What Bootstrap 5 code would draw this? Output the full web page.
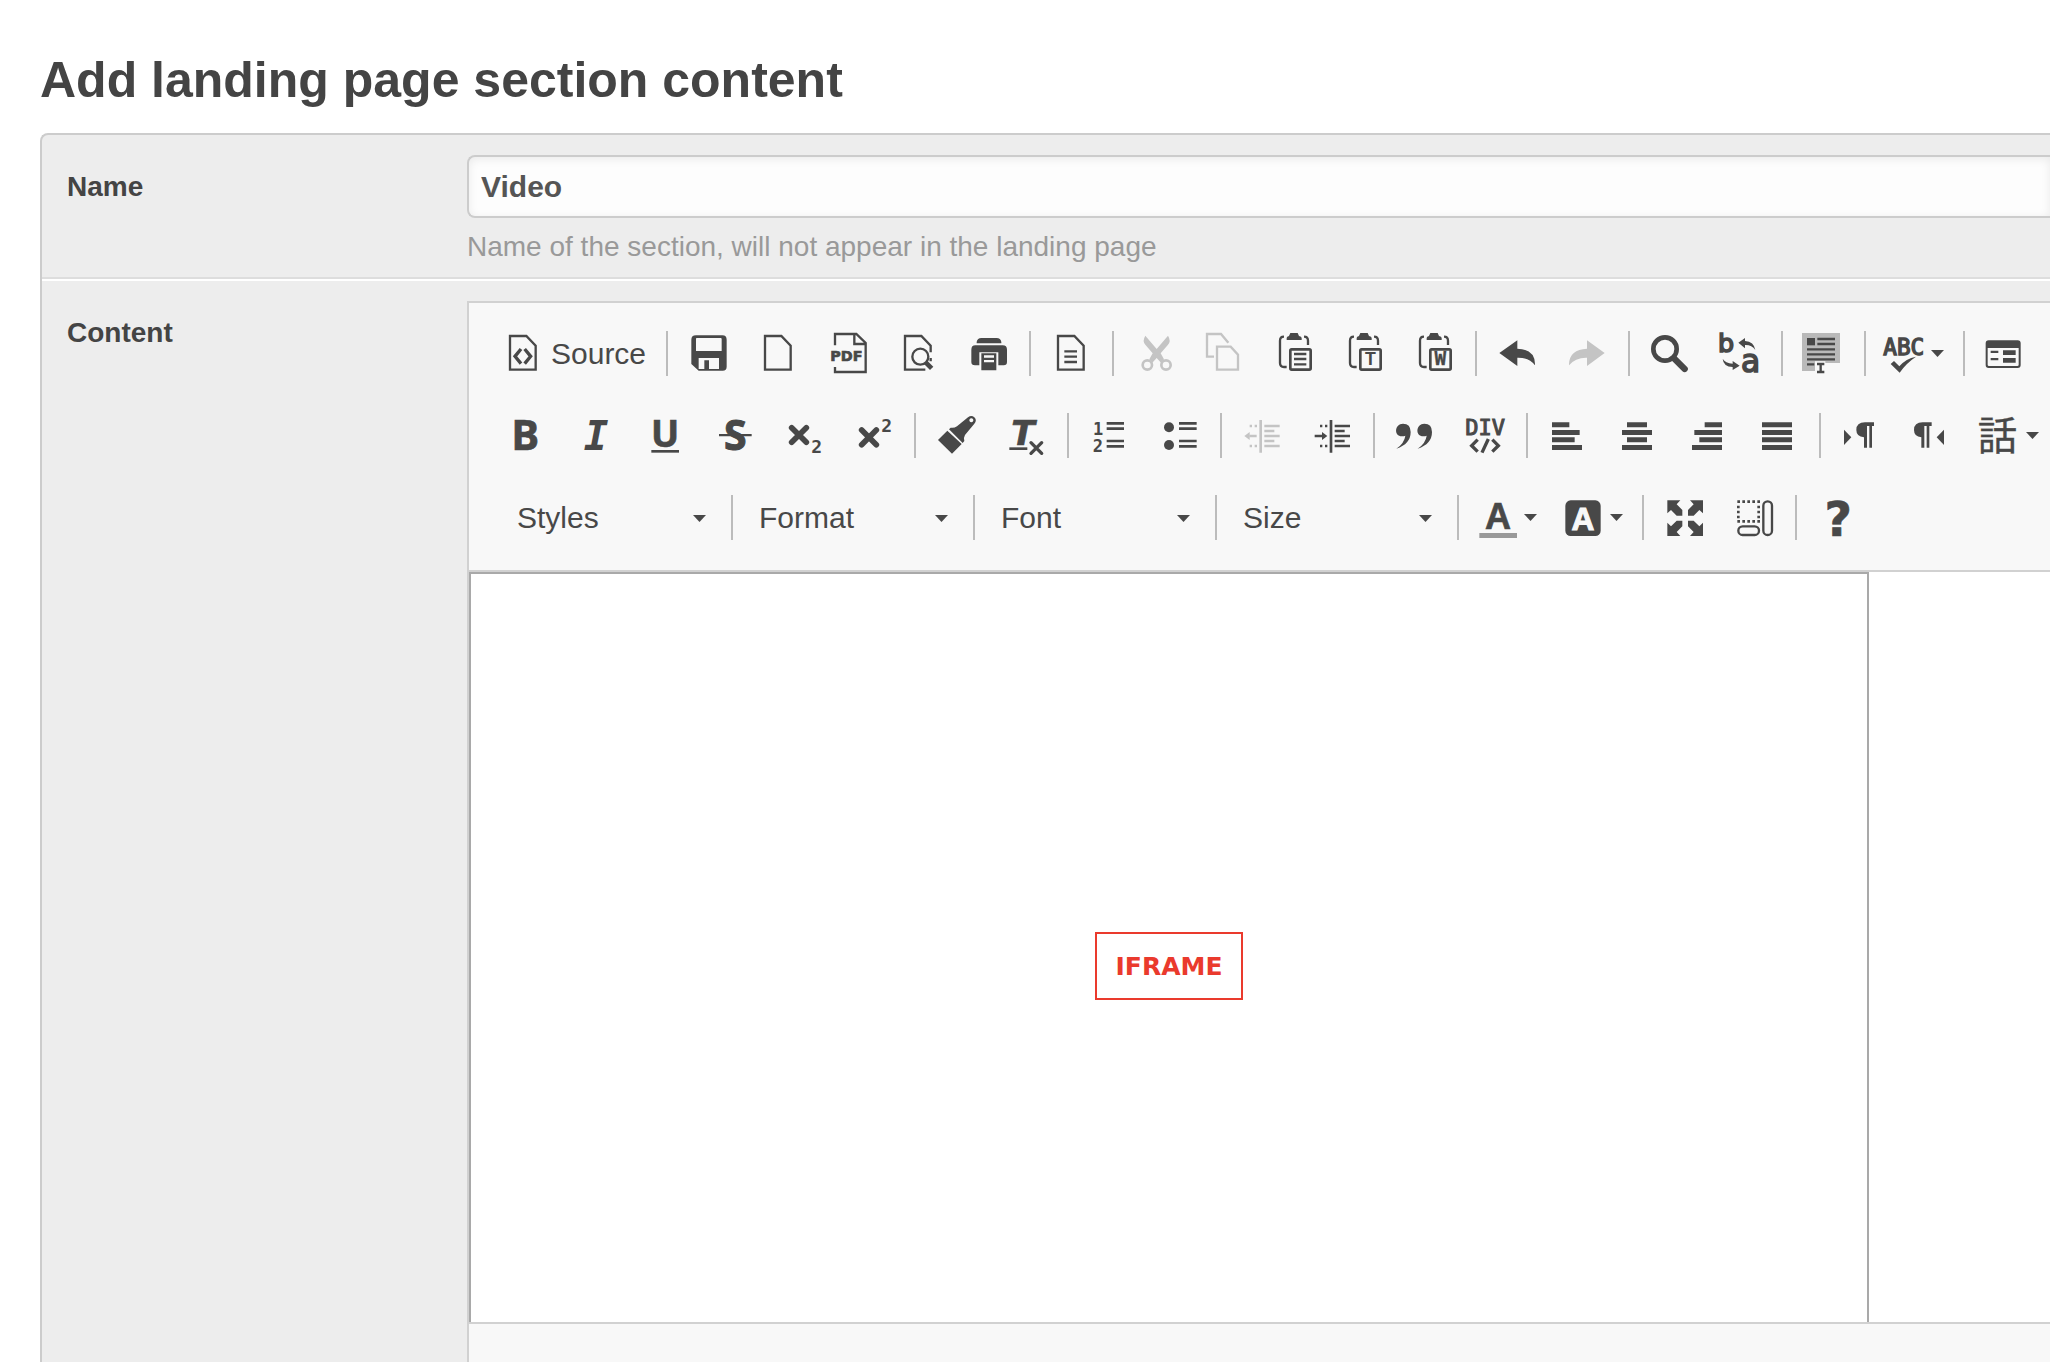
<!DOCTYPE html>
<html lang="en">
<head>
<meta charset="utf-8">
<meta name="viewport" content="width=device-width, initial-scale=1">
<title>Add landing page section content</title>
<link href="https://cdn.jsdelivr.net/npm/bootstrap@5.3.0/dist/css/bootstrap.min.css" rel="stylesheet">
<style>
body { font-family: "Liberation Sans", Arial, sans-serif; color: #444; background: #fff; overflow-x: hidden; }
.page { padding: 50px 0 0 40px; }
.page-title { font-size: 50px; line-height: 60px; font-weight: 700; margin-bottom: 23px; color: #444; }
.form-panel { border: 2px solid #ccc; border-right: 0; border-bottom: 0; border-top-left-radius: 8px; background: #ededed; }
.form-line { padding: 20px 0 0 25px; }
.form-line + .form-line { border-top: 2px solid #fff; }
.name-line { padding-bottom: 14px; border-bottom: 2px solid #ddd; }
.line-label { flex: 0 0 400px; padding-top: 16px; font-size: 28px; line-height: 32px; font-weight: 700; }
.name-input { height: 63px; padding: 0 12px; border: 2px solid #ccc; border-right: 0; border-radius: 8px 0 0 8px; background: #fdfdfd; box-shadow: inset 0 2px 10px rgba(0,0,0,.08); font-size: 30px; font-weight: 700; color: #555; }
.hint { margin-top: 13px; font-size: 28px; line-height: 32px; color: #999; }
.editor { border: 2px solid #d1d1d1; border-right: 0; border-bottom: 0; background: #f8f8f8; }
.tools { padding: 28px 0 30px 19px; gap: 37px; border-bottom: 2px solid #d1d1d1; }
.tool-row { height: 45px; }
.tool { flex: none; width: 70px; height: 45px; padding: 0; border: 0; background: none; color: #484848; display: flex; align-items: center; justify-content: center; }
.tool:disabled { color: #c4c4c4; }
.tool svg { width: 40px; height: 41px; flex: none; display: block; overflow: visible; fill: currentColor; }
.tool .caret { width: 13px; height: 7px; }
.tool-source { width: 172px; justify-content: flex-start; padding-left: 15px; gap: 8px; font-size: 30px; }
.tool-menu { width: 86px; justify-content: flex-start; padding-left: 13px; gap: 7px; }
.divider { flex: none; width: 2px; height: 45px; margin: 0 5px 0 6px; background: #bcbcbc; }
.combo { flex: none; width: 229px; height: 45px; padding: 0 0 0 21px; border: 0; border-radius: 0; font-size: 30px; line-height: 45px; color: #484848; background: transparent url("data:image/svg+xml,%3Csvg xmlns='http://www.w3.org/2000/svg' viewBox='0 0 13 7'%3E%3Cpath fill='%23484848' d='M0 0h13L6.500 7z'/%3E%3C/svg%3E") no-repeat right 19px top 20px / 13px 7px; }
.ol { fill: none; stroke: currentColor; }
.document { height: 750px; background: #fff; overflow: hidden; }
.frame-box { width: 1400px; height: 788px; border: 2px solid #a9a9a9; }
.frame-tag { width: 148px; height: 68px; border: 2px solid #ea3a2d; color: #ea3a2d; font: 700 25px/66px "DejaVu Sans", sans-serif; }
.status { height: 80px; border-top: 2px solid #d1d1d1; }
.mono { font-family: "DejaVu Sans Mono", monospace; font-weight: 700; }
.dj { font-family: "DejaVu Sans", sans-serif; font-weight: 700; }
.os { font-family: "Open Sans", sans-serif; font-weight: 700; }
.ar { font-family: "Liberation Sans", sans-serif; font-weight: 700; }
.thin { font-weight: 400; }
</style>
</head>
<body>
<main class="page vh-100 overflow-hidden">
<h1 class="page-title">Add landing page section content</h1>
<form class="form-panel">
  <div class="form-line name-line d-flex">
    <label class="line-label" for="name">Name</label>
    <div class="flex-grow-1">
      <input class="name-input form-control" id="name" type="text" value="Video" aria-describedby="name-hint">
      <div class="hint" id="name-hint">Name of the section, will not appear in the landing page</div>
    </div>
  </div>
  <div class="form-line d-flex">
    <div class="line-label" id="content-label">Content</div>
    <div class="editor flex-grow-1" role="group" aria-labelledby="content-label">
      <div class="tools d-flex flex-column" role="toolbar">

        <div class="tool-row d-flex align-items-center">
          <button type="button" class="tool tool-source"><svg viewBox="129 99 120 123"><path class="ol" stroke-width="7" d="M150 108h49l28 29v72h-77z"/><path class="ol" stroke-width="10" d="M183 147l-18 22 18 22M194 147l18 22-18 22"/></svg>Source</button>
          <span class="divider"></span>
          <button type="button" class="tool" aria-label="Save"><svg viewBox="684 99 120 123"><path fill-rule="evenodd" d="M708 106h79q13 0 13 13v81q0 12-12 12h-72l-22-20v-73q0-13 14-13zm2 8q-2 0-2 3v36h77v-36q0-3-3-3zM716 174v33h61v-33zm17 7h14v26h-14z"/></svg></button>
          <button type="button" class="tool" aria-label="New page"><svg viewBox="894 99 120 123"><path class="ol" stroke-width="7" d="M915 108h49l28 29v72h-77z"/></svg></button>
          <button type="button" class="tool" aria-label="Export to PDF"><svg viewBox="-36 99 120 123"><path class="ol" stroke-width="7" d="M-15 136v-34h64l28 27v87h-92v-15M43 102v30h34"/><text class="dj" x="-29" y="183" font-size="43" stroke="currentColor" stroke-width="2">PDF</text></svg></button>
          <button type="button" class="tool" aria-label="Preview"><svg viewBox="174 99 120 123"><path class="ol" stroke-width="7" d="M256 209h-61v-101h49l28 29v20M272 174v10"/><circle class="ol" stroke-width="7" cx="241" cy="170" r="24"/><path stroke="currentColor" stroke-width="14" d="M257 187l18 18"/></svg></button>
          <button type="button" class="tool" aria-label="Print"><svg viewBox="384 99 120 123"><path fill-rule="evenodd" d="M410 130v-4q2-12 14-12h46q12 0 14 12v4zM406 136h82q13 0 13 13v37q0 10-10 10h-16v-39h-57v39h-13q-11 0-11-10v-37q0-13 12-13zM424 160h45v51h-45zm8 6v7h30v-7zm0 14v7h30v-7z"/></svg></button>
          <span class="divider"></span>
          <button type="button" class="tool" aria-label="Templates"><svg viewBox="633 99 120 123"><path class="ol" stroke-width="7" d="M654 108h49l28 29v72h-77zM673 154h38M673 170h38M673 186h38"/></svg></button>
          <span class="divider"></span>
          <button type="button" class="tool" aria-label="Cut" disabled><svg viewBox="882 99 120 123"><g class="ol" stroke-width="8"><circle cx="922" cy="195" r="14"/><circle cx="978" cy="195" r="14"/></g><path d="M916 107q-10 16 0 27l22 26-10 18 9 10 13-14 13 14 9-10-10-18 22-26q10-11 0-27l-34 40z"/></svg></button>
          <button type="button" class="tool" aria-label="Copy" disabled><svg viewBox="1092 99 120 123"><path class="ol" stroke-width="7" d="M1122 170h-21v-68h42l22 26M1131 140h41l22 24v45h-63z"/></svg></button>
          <button type="button" class="tool" aria-label="Paste"><svg viewBox="162 99 120 123"><path d="M200 120v-6q0-5 7-6l4-9h22l4 9q8 1 8 6v6z"/><path class="ol" stroke-width="7" d="M192 110q-12 0-12 12v67q0 12 12 12h8M252 110q12 0 12 12v13"/><rect class="ol" stroke-width="8" x="211" y="148" width="61" height="61" rx="4"/><path class="ol" stroke-width="7" d="M222 162h37M222 177h37M222 193h37"/></svg></button>
          <button type="button" class="tool" aria-label="Paste as plain text"><svg viewBox="372 99 120 123"><path d="M410 120v-6q0-5 7-6l4-9h22l4 9q8 1 8 6v6z"/><path class="ol" stroke-width="7" d="M402 110q-12 0-12 12v67q0 12 12 12h8M462 110q12 0 12 12v13"/><rect class="ol" stroke-width="8" x="421" y="148" width="61" height="61" rx="4"/><text class="ar" text-anchor="middle" x="451" y="196" font-size="53">T</text></svg></button>
          <button type="button" class="tool" aria-label="Paste from Word"><svg viewBox="582 99 120 123"><path d="M620 120v-6q0-5 7-6l4-9h22l4 9q8 1 8 6v6z"/><path class="ol" stroke-width="7" d="M612 110q-12 0-12 12v67q0 12 12 12h8M672 110q12 0 12 12v13"/><rect class="ol" stroke-width="8" x="631" y="148" width="61" height="61" rx="4"/><text class="mono" text-anchor="middle" x="661" y="196" font-size="58" stroke="currentColor" stroke-width="1">W</text></svg></button>
          <span class="divider"></span>
          <button type="button" class="tool" aria-label="Undo"><svg viewBox="831 99 120 123"><path d="M838 159l54-38v25q52 2 53 46v4q-18-24-53-23v25z"/></svg></button>
          <button type="button" class="tool" aria-label="Redo" disabled><svg viewBox="1041 99 120 123"><path d="M1154 159l-53-38v25q-52 2-54 46v4q19-24 54-23v25z"/></svg></button>
          <span class="divider"></span>
          <button type="button" class="tool" aria-label="Find"><svg viewBox="90 99 120 123"><circle class="ol" stroke-width="14" cx="135" cy="147" r="35"/><path class="ol" stroke-width="19" stroke-linecap="round" d="M164 177l30 30"/></svg></button>
          <button type="button" class="tool" aria-label="Replace"><svg viewBox="300 99 120 123"><text class="dj thin" x="294" y="157" font-size="76" stroke="currentColor" stroke-width="5">b</text><text class="dj thin" x="363" y="216" font-size="94" stroke="currentColor" stroke-width="5">a</text><path d="M355 128l20-14v9q27 2 31 27-11-16-31-15v10zM359 197l-21-14v8q-22-2-30-15 2 24 30 25v9z"/></svg></button>
          <span class="divider"></span>
          <button type="button" class="tool" aria-label="Select all"><svg viewBox="549 99 120 123"><path fill="#b9b9b9" d="M546 99h114v90h-44v-5h-31v29h-39z"/><path d="M561 114h24v22h-24z"/><path class="ol" stroke-width="7" d="M592 117h53M592 132h53M561 148h84M561 163h84M561 178h84M561 193h22"/><path class="ol" stroke-width="7" d="M591 192h22M591 216h22M602 192v24"/></svg></button>
          <span class="divider"></span>
          <button type="button" class="tool tool-menu" aria-label="Spell check"><svg viewBox="792 99 120 123"><text class="mono thin" x="790" y="166" font-size="68" stroke="currentColor" stroke-width="4">ABC</text><path d="M812 192l10-9 16 16q20-24 50-29-30 20-49 48z"/></svg><svg class="caret" viewBox="0 0 13 7"><path d="M0 0h13L6.500 7z"/></svg></button>
          <span class="divider"></span>
          <button type="button" class="tool" aria-label="Form"><svg viewBox="1095 99 120 123"><path fill-rule="evenodd" d="M1106 121h87q9 0 9 9v65q0 9-9 9h-87q-9 0-9-9v-65q0-9 9-9zm-3 23v50q0 4 4 4h85q4 0 4-4v-50zM1112 152h23v7h-23zM1112 174h23v7h-23zM1149 151h38v14h-38zM1149 174h38v14h-38z"/></svg></button>
        </div>

        <div class="tool-row d-flex align-items-center">
          <button type="button" class="tool" aria-label="Bold"><svg viewBox="129 345 120 123"><text class="os" text-anchor="middle" x="196" y="450" font-size="125" stroke="currentColor" stroke-width="2">B</text></svg></button>
          <button type="button" class="tool" aria-label="Italic"><svg viewBox="339 345 120 123"><text class="mono" font-style="italic" text-anchor="middle" x="408" y="450" font-size="123">I</text></svg></button>
          <button type="button" class="tool" aria-label="Underline"><svg viewBox="549 345 120 123"><text class="os" text-anchor="middle" x="615" y="440" font-size="112" stroke="currentColor" stroke-width="2">U</text><path d="M574 450h83v8h-83z"/></svg></button>
          <button type="button" class="tool" aria-label="Strikethrough"><svg viewBox="759 345 120 123"><text class="os" text-anchor="middle" x="826" y="449" font-size="123" stroke="currentColor" stroke-width="3">S</text><path d="M777 402h98v7h-98z"/></svg></button>
          <button type="button" class="tool" aria-label="Subscript"><svg viewBox="969 345 120 123"><path class="ol" stroke-width="17" stroke-linecap="round" d="M995 383l44 44M1039 383l-44 44"/><text class="mono" x="1054" y="458" font-size="54">2</text></svg></button>
          <button type="button" class="tool" aria-label="Superscript"><svg viewBox="39 345 120 123"><path class="ol" stroke-width="17" stroke-linecap="round" d="M65 390l44 44M109 390l-44 44"/><text class="mono" x="124" y="397" font-size="54">2</text></svg></button>
          <span class="divider"></span>
          <button type="button" class="tool" aria-label="Copy formatting"><svg viewBox="288 345 120 123"><path fill-rule="evenodd" d="M294 420l28-28 43 40-29 29zM327 388l5-5q10 2 19-4l33-27q10-8 19 0 9 9 0 19l-28 34q-5 8-2 18l-5 6zM394 355a6 6 0 1 0 .1 0z"/></svg></button>
          <button type="button" class="tool" aria-label="Remove format"><svg viewBox="498 345 120 123"><text class="dj" font-style="italic" text-anchor="middle" x="549" y="435" font-size="103" stroke="currentColor" stroke-width="2">T</text><path d="M508 442h54v8h-54z"/><path class="ol" stroke-width="10" stroke-linecap="round" d="M573 428l32 32M605 428l-32 32"/></svg></button>
          <span class="divider"></span>
          <button type="button" class="tool" aria-label="Numbered list"><svg viewBox="747 345 120 123"><text class="mono" x="759" y="404" font-size="51">1</text><text class="mono" x="758" y="457" font-size="51">2</text><path class="ol" stroke-width="8" d="M800 370h52M800 386h52M800 423h52M800 439h52"/></svg></button>
          <button type="button" class="tool" aria-label="Bulleted list"><svg viewBox="957 345 120 123"><circle cx="987" cy="382" r="15"/><circle cx="987" cy="435" r="15"/><path class="ol" stroke-width="8" d="M1017 370h53M1017 386h53M1017 423h53M1017 439h53"/></svg></button>
          <span class="divider"></span>
          <button type="button" class="tool" aria-label="Decrease indent" disabled><svg viewBox="66 345 120 123"><path class="ol" stroke-width="8" d="M122 360v98M133 378h46M133 393h30M133 408h46M133 423h30M133 438h46M110 408h-22M89 378h7M104 378h7M89 438h7M104 438h7"/><path d="M73 408l16-12v24z"/></svg></button>
          <button type="button" class="tool" aria-label="Increase indent"><svg viewBox="276 345 120 123"><path class="ol" stroke-width="8" d="M333 360v98M344 378h46M344 393h30M344 408h46M344 423h30M344 438h46M284 408h24M300 378h7M315 378h7M300 438h7M315 438h7"/><path d="M322 408l-16-12v24z"/></svg></button>
          <span class="divider"></span>
          <button type="button" class="tool" aria-label="Block quote"><svg viewBox="525 345 120 123"><path d="M549 371c-26 0-28 38-3 38q6 0 10-2-3 23-27 39 43-14 43-50 0-25-23-25zM613 371c-26 0-28 38-3 38q6 0 10-2-3 23-27 39 43-14 43-50 0-25-23-25z"/></svg></button>
          <button type="button" class="tool" aria-label="Create div container"><svg viewBox="735 345 120 123"><text class="mono thin" x="736" y="405" font-size="66" stroke="currentColor" stroke-width="3">DIV</text><path class="ol" stroke-width="10" d="M773 419l-18 18 18 18M817 419l18 18-18 18M805 417l-19 41"/></svg></button>
          <span class="divider"></span>
          <button type="button" class="tool" aria-label="Align left"><svg viewBox="984 345 120 123"><path d="M996 367h52v15h-52zM996 390h83v15h-83zM996 412h68v15h-68zM996 435h90v15h-90z"/></svg></button>
          <button type="button" class="tool" aria-label="Center"><svg viewBox="-6 345 120 123"><path d="M21 367h60v15h-60zM6 390h90v15h-90zM21 412h60v15h-60zM6 435h90v15h-90z"/></svg></button>
          <button type="button" class="tool" aria-label="Align right"><svg viewBox="204 345 120 123"><path d="M254 367h52v15h-52zM223 390h83v15h-83zM238 412h68v15h-68zM216 435h90v15h-90z"/></svg></button>
          <button type="button" class="tool" aria-label="Justify"><svg viewBox="414 345 120 123"><path d="M426 367h90v15h-90zM426 390h90v15h-90zM426 412h90v15h-90zM426 435h90v15h-90z"/></svg></button>
          <span class="divider"></span>
          <button type="button" class="tool" aria-label="Text direction left to right"><svg viewBox="663 345 120 123"><path d="M672 389l22 23-22 23z"/><path d="M735 367h27v11h-6v65h-8v-65h-7v65h-9v-31q-23-2-23-22 0-23 26-23z"/></svg></button>
          <button type="button" class="tool" aria-label="Text direction right to left"><svg viewBox="873 345 120 123"><path d="M972 389l-22 23 22 23z"/><path d="M908 367h27v11h-7v65h-8v-65h-7v65h-9v-31q-22-2-22-22 0-23 26-23z"/></svg></button>
          <button type="button" class="tool tool-menu" aria-label="Language"><svg viewBox="1077 345 120 123"><text x="1132" y="450" text-anchor="middle" font-size="118" style="font-family:'Noto Sans CJK JP',sans-serif" stroke="currentColor" stroke-width="1" lang="ja">話</text></svg><svg class="caret" viewBox="0 0 13 7"><path d="M0 0h13L6.500 7z"/></svg></button>
        </div>

        <div class="tool-row d-flex align-items-center ps-2">
          <select class="combo form-select" aria-label="Styles"><option>Styles</option></select>
          <span class="divider"></span>
          <select class="combo form-select" aria-label="Format"><option>Format</option></select>
          <span class="divider"></span>
          <select class="combo form-select" aria-label="Font"><option>Font</option></select>
          <span class="divider"></span>
          <select class="combo form-select" aria-label="Size"><option>Size</option></select>
          <span class="divider"></span>
          <button type="button" class="tool tool-menu" aria-label="Text color"><svg viewBox="771 591 120 123"><text class="ar" text-anchor="middle" x="834" y="686" font-size="108" stroke="currentColor" stroke-width="2">A</text><path fill="#999" d="M778 699h113v15h-113z"/></svg><svg class="caret" viewBox="0 0 13 7"><path d="M0 0h13L6.500 7z"/></svg></button>
          <button type="button" class="tool tool-menu" aria-label="Background color"><svg viewBox="1029 591 120 123"><rect x="1036" y="601" width="106" height="107" rx="16"/><text class="ar" fill="#f8f8f8" stroke="#f8f8f8" stroke-width="3" text-anchor="middle" x="1089" y="689" font-size="95">A</text></svg><svg class="caret" viewBox="0 0 13 7"><path d="M0 0h13L6.500 7z"/></svg></button>
          <span class="divider"></span>
          <button type="button" class="tool" aria-label="Maximize"><svg viewBox="132 591 120 123"><path d="M142 601h39l-11 12 17 17v17h-17l-17-17-11 10zM249 601h-39l11 12-17 17v17h17l17-17 11 10zM142 708h39l-11-12 17-17v-17h-17l-17 17-11-11zM249 708h-39l11-12-17-17v-17h17l17 17 11-11z"/></svg></button>
          <button type="button" class="tool" aria-label="Show blocks"><svg viewBox="342 591 120 123"><path class="ol" stroke-width="8" stroke-dasharray="8 7" d="M352 605h68M352 664h68M355 617v44M416 617v44"/><rect class="ol" stroke-width="7" x="430" y="604" width="26" height="101" rx="13"/><rect class="ol" stroke-width="7" x="355" y="679" width="62" height="26" rx="13"/></svg></button>
          <span class="divider"></span>
          <button type="button" class="tool" aria-label="About"><svg viewBox="591 591 120 123"><text class="dj" text-anchor="middle" x="655" y="707" font-size="142" stroke="currentColor" stroke-width="2">?</text></svg></button>
        </div>
      </div>

      <div class="document">
        <div class="frame-box d-flex align-items-center justify-content-center">
          <div class="frame-tag text-center">IFRAME</div>
        </div>
      </div>
      <div class="status"></div>
    </div>
  </div>
</form>
</main>
<script src="https://cdn.jsdelivr.net/npm/bootstrap@5.3.0/dist/js/bootstrap.bundle.min.js"></script>
</body>
</html>
